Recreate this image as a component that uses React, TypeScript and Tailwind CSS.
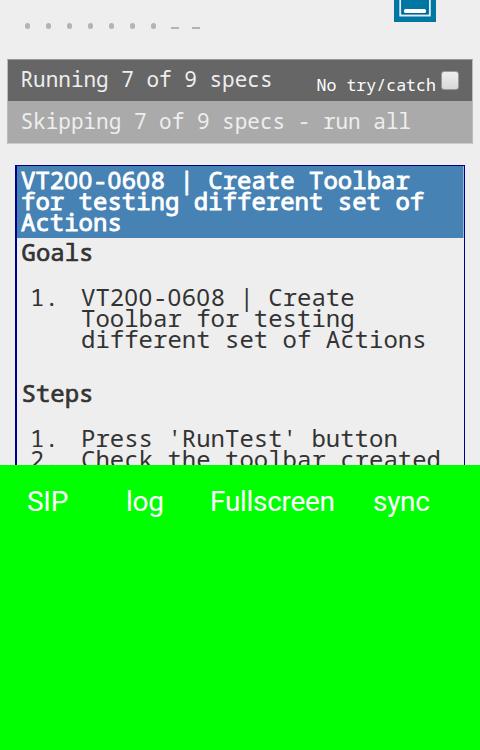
import React from 'react';

const results = ['•', '•', '•', '•', '•', '•', '•', '–', '–'];
const actions = [
  { label: 'SIP', cell: 'ml-[27px] w-[99px]' },
  { label: 'log', cell: 'w-[84px]' },
  { label: 'Fullscreen', cell: 'w-[163px]' },
  { label: 'sync', cell: '' },
];

// Open zero without the slash, spaced to the monospace advance.
function Zero() {
  return <span className="font-['Noto_Sans',sans-serif] leading-[0] tracking-[0.028em]">0</span>;
}

function Ticket() {
  return (
    <>
      VT2<Zero /><Zero />-<Zero />6<Zero />8
    </>
  );
}

function Heading({ children }: { children: React.ReactNode }) {
  return <h2 className="pl-[4.5px] text-2xl leading-[21px] [-webkit-text-stroke:0.7px_#333]">{children}</h2>;
}

function Item({ n, children }: { n: number; children: React.ReactNode }) {
  return (
    <li className="flex">
      <span className="w-[51px] shrink-0">{n}.</span>
      <span className="whitespace-pre">{children}</span>
    </li>
  );
}

export default function App() {
  return (
    <div className="flex h-[750px] w-[480px] flex-col overflow-hidden bg-[#eee] font-['Noto_Sans_Mono','DejaVu_Sans_Mono',monospace] text-[#333]">
      <main className="h-[465px] shrink-0 overflow-hidden">
        <header className="flex h-[59px] justify-between pr-11 pl-[21px]">
          <ul className="flex pt-[23px]">
            {results.map((r, i) => (
              <li key={i} className="flex h-[7px] w-[21px] pl-1">
                {r === '•' ? (
                  <span className="h-1.5 w-[5px] rounded-full bg-[#b3b3b3]" />
                ) : (
                  <span className="mt-1 -ml-px h-0.5 w-2 bg-[#b3b3b3]" />
                )}
              </li>
            ))}
          </ul>
          <svg width="42" height="22" viewBox="0 0 42 22">
            <path fill="#0076a3" d="M0 0h42v22H0z" />
            <path fill="none" stroke="#d9edf5" strokeWidth="2" d="M6.3 0v15.5h29.5V0" />
            <path fill="none" stroke="#005f90" d="M8 0v13.7h26V0" />
            <rect x="10" y="9" width="22" height="4" rx="1.5" fill="#fff" />
          </svg>
        </header>
        <section className="mx-[7px] h-[85px] border border-[#bbb] border-t-[#999] border-b-[#ccc] text-[21px] text-[#eee]">
          <div className="flex h-[41px] justify-between bg-[#666] pr-[13px] pl-[12.5px]">
            <span className="leading-[38px] whitespace-pre">Running 7 of 9 specs</span>
            <label className="flex text-[16.6px] text-white">
              <span className="pt-[5px] leading-[40px] whitespace-pre">No try/catch</span>
              <span className="mt-[11px] ml-[5px] h-[19px] w-[18px] rounded-[3px] border border-[#999] bg-linear-to-b from-[#eee] to-[#d8d8d8]" />
            </label>
          </div>
          <div className="h-[42px] bg-[#aaa] pl-[12.5px] leading-[40px] whitespace-pre">Skipping 7 of 9 specs - run all</div>
        </section>
        <article className="mt-[21px] mr-[15px] ml-[15px] h-[400px] border border-l-2 border-[#000088] text-2xl leading-[21px]">
          <h1 className="h-[72px] border-r border-[#9bb9d4] bg-[#4682b4] pt-[3px] pl-1 whitespace-pre text-white [-webkit-text-stroke:0.9px_white]"><Ticket />{` | Create Toolbar
for testing different set of
Actions`}</h1>
          <div className="pt-[3px]">
            <Heading>Goals</Heading>
            <ol className="mt-6 pl-[13px]">
              <Item n={1}><Ticket />{` | Create
Toolbar for testing
different set of Actions`}</Item>
            </ol>
            <div className="mt-[33px]">
              <Heading>Steps</Heading>
            </div>
            <ol className="mt-6 pl-[13px]">
              <Item n={1}>Press 'RunTest' button</Item>
              <Item n={2}>Check the toolbar created</Item>
            </ol>
          </div>
        </article>
      </main>
      <nav className="flex grow bg-[#00ff00] pt-[21px] font-[Roboto,sans-serif] text-[28px] leading-8 tracking-[-0.3px] text-white">
        {actions.map((a) => (
          <span key={a.label} className={a.cell}>{a.label}</span>
        ))}
      </nav>
    </div>
  );
}
